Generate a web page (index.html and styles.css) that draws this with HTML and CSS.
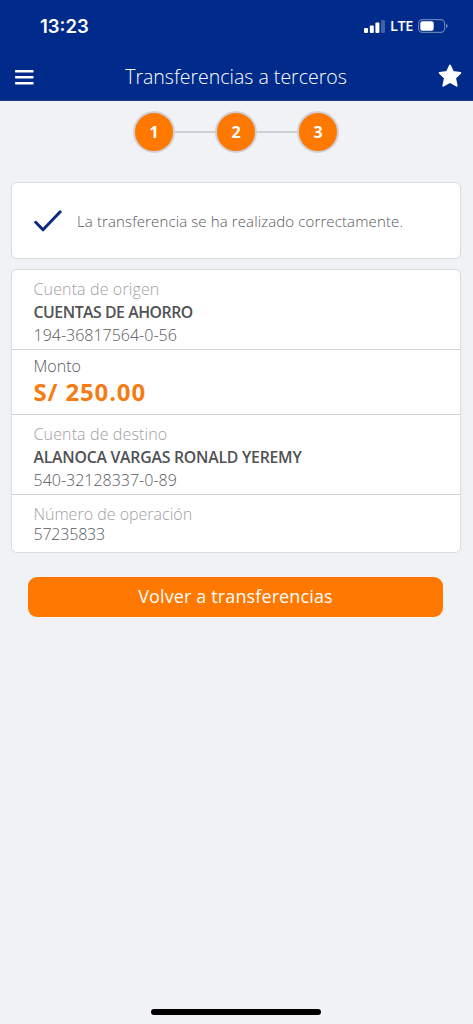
FILE: index.html
```html
<!DOCTYPE html>
<html lang="es">
<head>
<meta charset="utf-8">
<title>Transferencias a terceros</title>
<link rel="stylesheet" href="styles.css">
</head>
<body>
<div class="screen">
  <header class="header">
    <div class="status">
      <span class="time">13:23</span>
      <div class="indicators">
        <svg class="signal" width="21" height="13" viewBox="0 0 21 13" fill="#fff">
          <rect x="0" y="8" width="4" height="5" rx="1"/>
          <rect x="5.8" y="5.5" width="4" height="7.5" rx="1"/>
          <rect x="11.4" y="2.6" width="4" height="10.4" rx="1"/>
          <rect x="17" y="0" width="4" height="13" rx="1" opacity=".25"/>
        </svg>
        <span class="network">LTE</span>
        <svg class="battery" width="30" height="14" viewBox="0 0 30 14">
          <rect x=".6" y=".6" width="26" height="12.8" rx="3.8" fill="none" stroke="#fff" stroke-opacity=".4" stroke-width="1.1"/>
          <rect x="2.3" y="2.2" width="13.4" height="9.6" rx="2.2" fill="#fff"/>
          <path d="M28 4.8q1.7.7 1.7 2.2T28 9.2z" fill="#fff" opacity=".45"/>
        </svg>
      </div>
    </div>
    <div class="navbar">
      <svg class="menu" width="19" height="15" viewBox="0 0 19 15" fill="#fff">
        <rect y="0" width="18.6" height="2.4" rx=".7"/>
        <rect y="6" width="18.6" height="2.4" rx=".7"/>
        <rect y="12" width="18.6" height="2.4" rx=".7"/>
      </svg>
      <h1 class="title">Transferencias a terceros</h1>
      <svg class="star" width="24" height="24" viewBox="0 0 24 24">
        <path d="M12 1.5 15 8 22.4 8.9 17.1 14 18.7 21.8 12 18 5.3 21.8 6.9 14 1.6 8.9 9 8Z" fill="#fff" stroke="#fff" stroke-width="1.8" stroke-linejoin="round"/>
      </svg>
    </div>
  </header>
  <main class="content">
    <div class="steps">
      <span class="step">1</span><span class="line"></span><span class="step">2</span><span class="line"></span><span class="step">3</span>
    </div>
    <section class="card message">
      <svg width="28" height="22" viewBox="0 0 28 22">
        <path d="M1.7 12.3 9 19.8 26.2 1.8" fill="none" stroke="#0b2a80" stroke-width="3" stroke-linecap="round" stroke-linejoin="round"/>
      </svg>
      <p class="notice">La transferencia se ha realizado correctamente.</p>
    </section>
    <section class="card details">
      <div class="row origin">
        <p class="label wide">Cuenta de origen</p>
        <p class="name tight">CUENTAS DE AHORRO</p>
        <p class="number">194-36817564-0-56</p>
      </div>
      <div class="row amount-row">
        <p class="caption">Monto</p>
        <p class="amount">S/ 250.00</p>
      </div>
      <div class="row target">
        <p class="label wide">Cuenta de destino</p>
        <p class="name">ALANOCA VARGAS RONALD YEREMY</p>
        <p class="number">540-32128337-0-89</p>
      </div>
      <div class="row operation">
        <p class="label">Número de operación</p>
        <p class="number short">57235833</p>
      </div>
    </section>
    <button class="button" type="button">Volver a transferencias</button>
  </main>
  <div class="home"></div>
</div>
</body>
</html>
```
FILE: styles.css
```css
* { box-sizing: border-box; }
body, h1, p { margin: 0; }
body { background: #f0f2f6; font-family: "Open Sans", "Noto Sans", sans-serif; }
.screen { display: flex; flex-direction: column; height: 1024px; }
.header { height: 101px; border-bottom: 1px solid #1d3a80; background: #002b8a; color: #fff; }
.status { display: flex; justify-content: space-between; align-items: center; height: 52px; padding: 0 25px 0 40px; }
.time { font: 600 18.5px/24px Inter, sans-serif; }
.indicators { display: flex; align-items: center; }
.network { margin: 0 5px 0 5px; font: 600 14.5px/18px "Open Sans", sans-serif; letter-spacing: -.4px; }
.navbar { display: flex; align-items: center; justify-content: space-between; height: 48px; padding: 0 11px 0 15px; }
.menu { margin-top: 3px; }
.title { margin: 2px 0 0; font-size: 19.5px; font-weight: 300; line-height: 28px; }
.content { flex: 1; padding: 9px 12px 0 11px; }
.steps { display: flex; align-items: center; justify-content: center; height: 43px; }
.step { width: 42px; height: 42px; border: 2px solid #cfd1d6; border-radius: 50%; background: #ff7800; color: #fff; font-size: 16px; font-weight: 700; line-height: 39px; text-align: center; }
.line { width: 40px; height: 2px; background: #cfd1d6; }
.card { border: 1px solid #d9dbdf; border-radius: 6px; background: #fff; color: #58585b; font-size: 16px; font-weight: 300; line-height: 23px; }
.message { display: flex; align-items: center; gap: 15px; height: 77px; margin-top: 29px; padding-left: 22px; }
.notice { padding-top: 2px; font-size: 15px; letter-spacing: .12px; white-space: nowrap; }
.details { height: 284px; margin-top: 10px; }
.row { padding-left: 21.5px; border-bottom: 1px solid #d0d1d4; }
.row:last-child { border-bottom: 0; }
.origin { height: 80px; padding-top: 8px; }
.amount-row { height: 65px; padding-top: 5px; }
.target { height: 80px; padding-top: 8px; }
.operation { padding-top: 9px; line-height: 20px; }
.label { color: #a0a0a3; }
.wide { letter-spacing: .13px; }
.number { letter-spacing: 0; }
.short { letter-spacing: -.2px; }
.name { color: #505154; font-size: 15.8px; font-weight: 600; letter-spacing: -.23px; }
.tight { letter-spacing: -.45px; }
.amount { color: #f57c14; font-size: 24px; font-weight: 700; line-height: 28px; letter-spacing: .85px; }
.button { display: block; width: 415px; height: 40px; margin: 24px 0 0 17px; padding: 0 0 2px; border: 0; border-radius: 9px; background: #ff7800; color: #fff; font: 500 18px/24px "Open Sans", sans-serif; letter-spacing: .12px; }
.home { width: 170px; height: 6px; margin: 0 auto 9px 151px; border-radius: 3px; background: #000; }
```
